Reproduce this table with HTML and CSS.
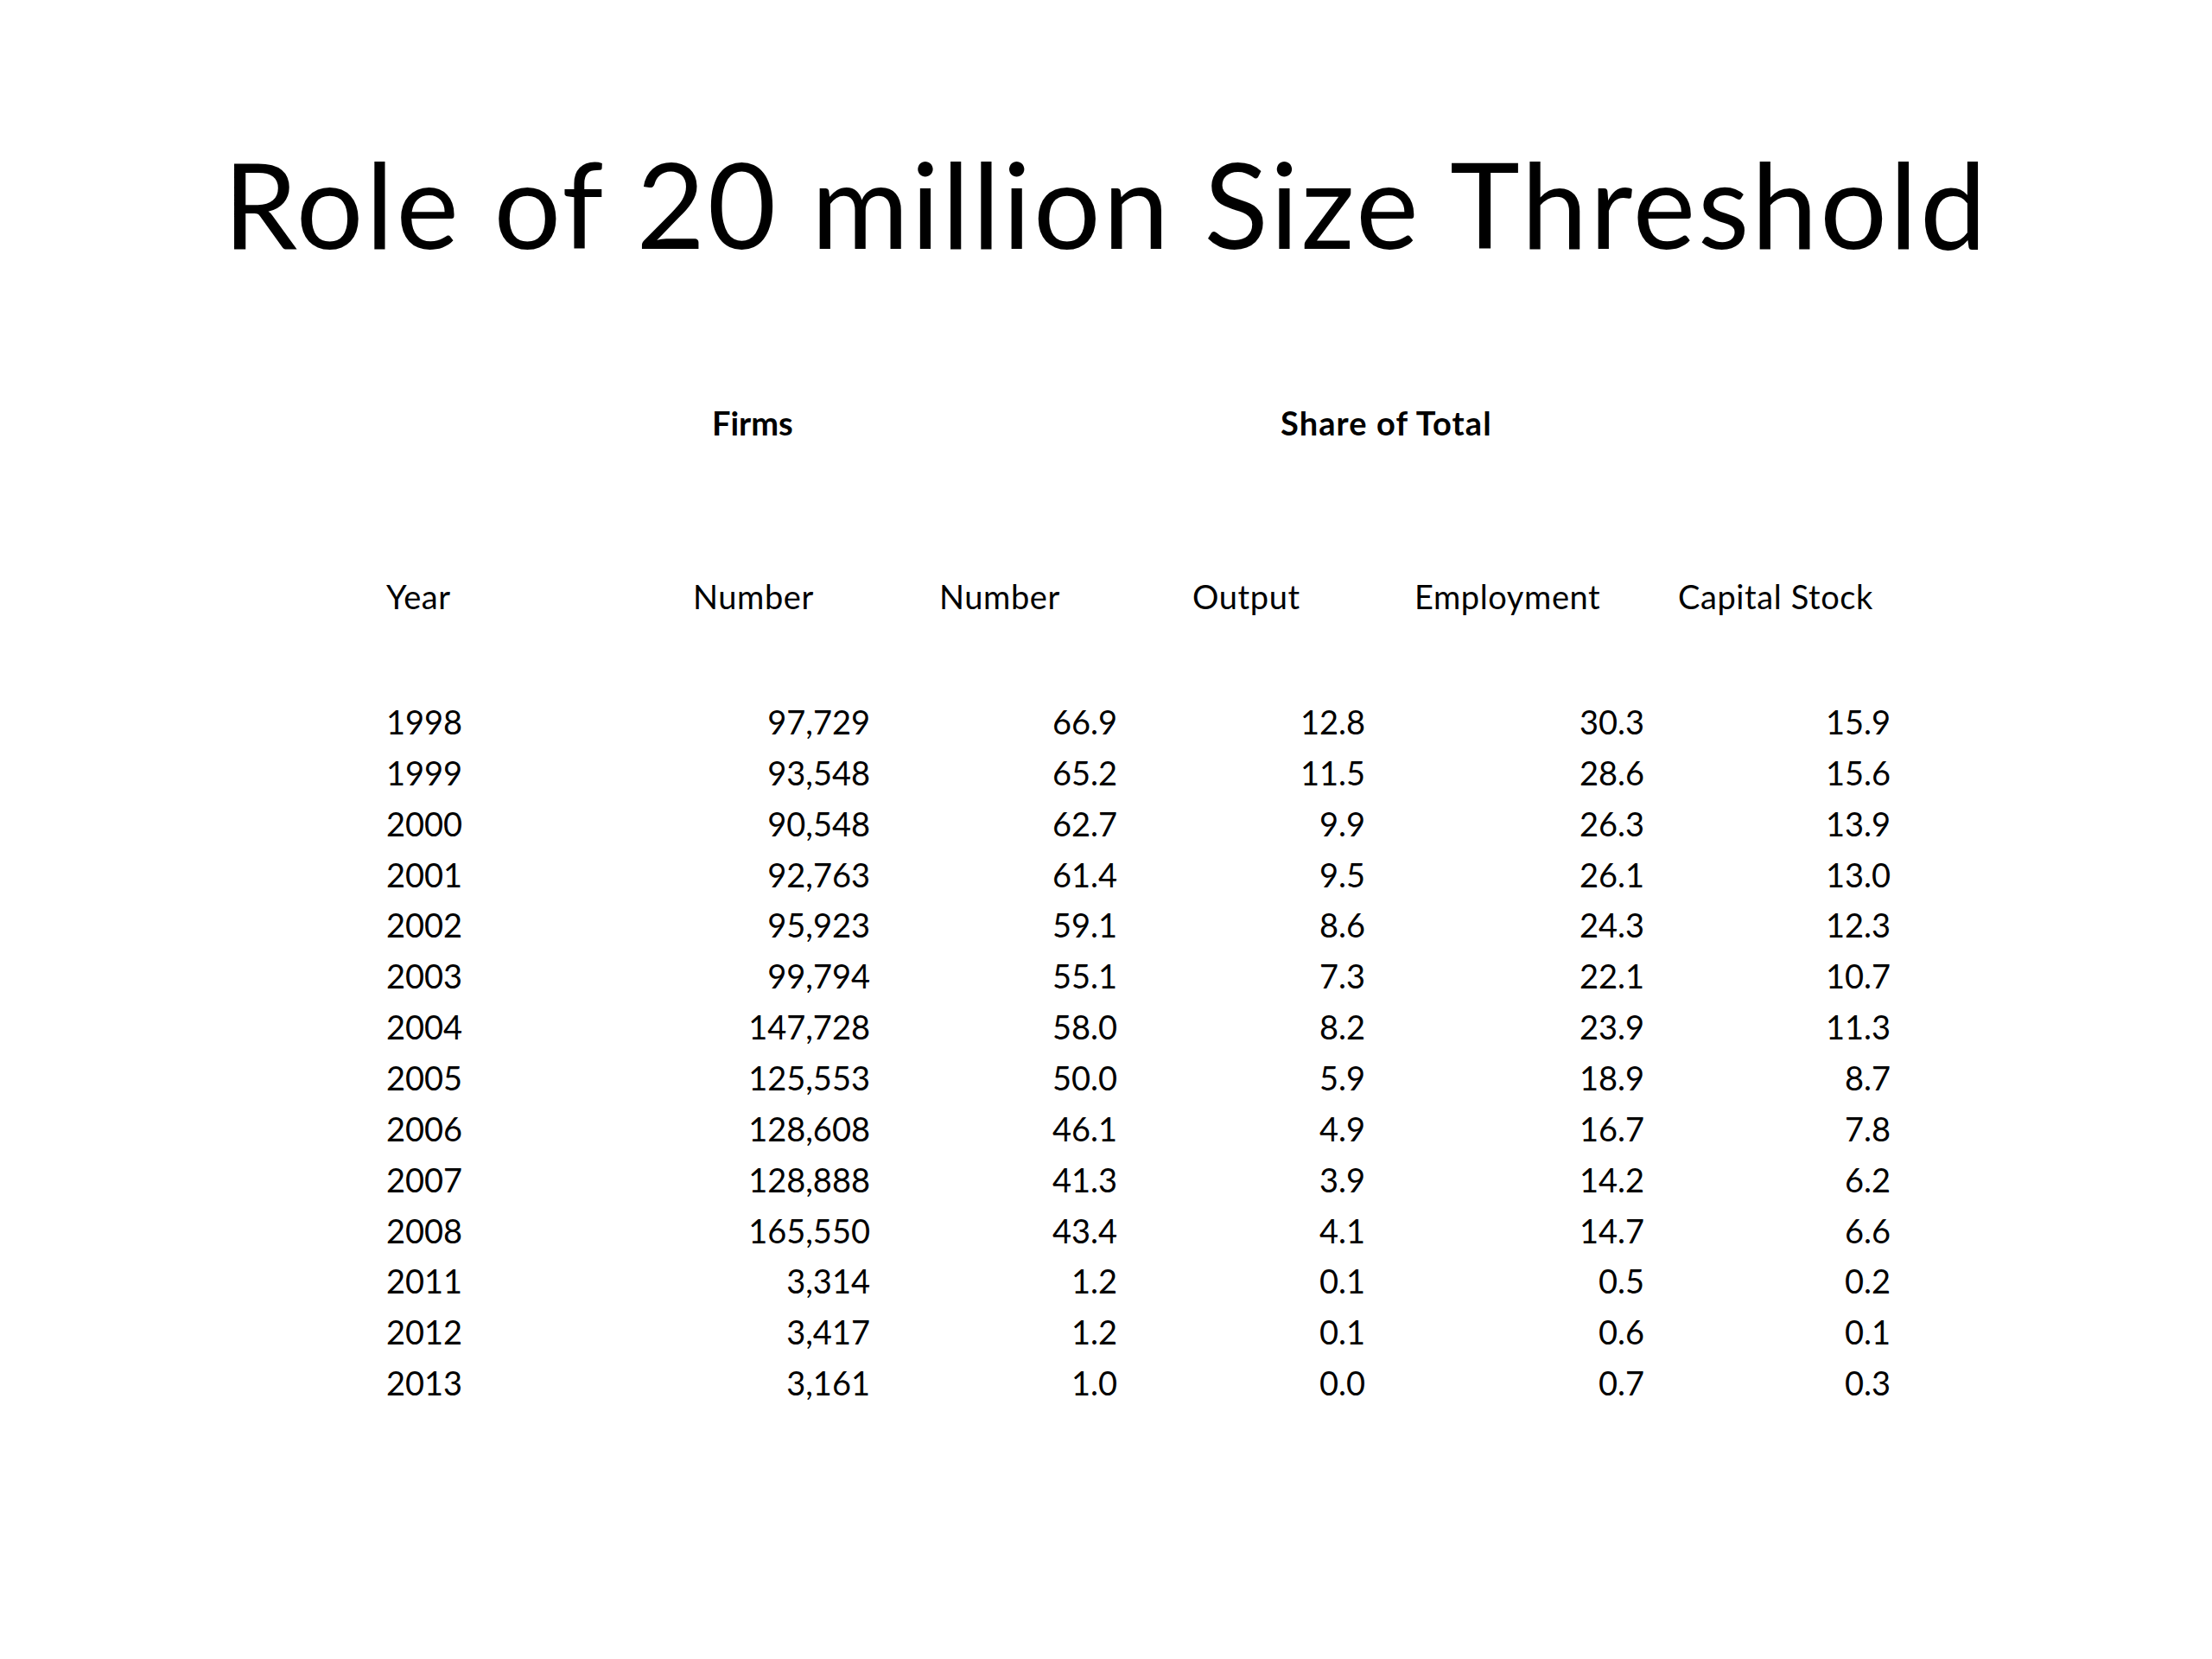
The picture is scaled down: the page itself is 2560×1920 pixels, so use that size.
FILE: index.html
```html
<!DOCTYPE html>
<html lang="en">
<head>
<meta charset="utf-8">
<title>Role of 20 million Size Threshold</title>
<link rel="stylesheet" href="styles.css">
</head>
<body>
<main class="slide">
  <h1 class="title">Role of 20 million Size Threshold</h1>
  <section class="table">
    <div class="row group">
      <div class="cell"></div>
      <div class="cell firms">Firms</div>
      <div class="cell share">Share of Total</div>
    </div>
    <div class="row heads">
      <div class="cell">Year</div>
      <div class="cell">Number</div>
      <div class="cell">Number</div>
      <div class="cell">Output</div>
      <div class="cell">Employment</div>
      <div class="cell">Capital Stock</div>
    </div>
    <div class="data">
      <div class="row"><div class="cell">1998</div><div class="cell n1">97,729</div><div class="cell n2">66.9</div><div class="cell n3">12.8</div><div class="cell n4">30.3</div><div class="cell n5">15.9</div></div>
      <div class="row"><div class="cell">1999</div><div class="cell n1">93,548</div><div class="cell n2">65.2</div><div class="cell n3">11.5</div><div class="cell n4">28.6</div><div class="cell n5">15.6</div></div>
      <div class="row"><div class="cell">2000</div><div class="cell n1">90,548</div><div class="cell n2">62.7</div><div class="cell n3">9.9</div><div class="cell n4">26.3</div><div class="cell n5">13.9</div></div>
      <div class="row"><div class="cell">2001</div><div class="cell n1">92,763</div><div class="cell n2">61.4</div><div class="cell n3">9.5</div><div class="cell n4">26.1</div><div class="cell n5">13.0</div></div>
      <div class="row"><div class="cell">2002</div><div class="cell n1">95,923</div><div class="cell n2">59.1</div><div class="cell n3">8.6</div><div class="cell n4">24.3</div><div class="cell n5">12.3</div></div>
      <div class="row"><div class="cell">2003</div><div class="cell n1">99,794</div><div class="cell n2">55.1</div><div class="cell n3">7.3</div><div class="cell n4">22.1</div><div class="cell n5">10.7</div></div>
      <div class="row"><div class="cell">2004</div><div class="cell n1">147,728</div><div class="cell n2">58.0</div><div class="cell n3">8.2</div><div class="cell n4">23.9</div><div class="cell n5">11.3</div></div>
      <div class="row"><div class="cell">2005</div><div class="cell n1">125,553</div><div class="cell n2">50.0</div><div class="cell n3">5.9</div><div class="cell n4">18.9</div><div class="cell n5">8.7</div></div>
      <div class="row"><div class="cell">2006</div><div class="cell n1">128,608</div><div class="cell n2">46.1</div><div class="cell n3">4.9</div><div class="cell n4">16.7</div><div class="cell n5">7.8</div></div>
      <div class="row"><div class="cell">2007</div><div class="cell n1">128,888</div><div class="cell n2">41.3</div><div class="cell n3">3.9</div><div class="cell n4">14.2</div><div class="cell n5">6.2</div></div>
      <div class="row"><div class="cell">2008</div><div class="cell n1">165,550</div><div class="cell n2">43.4</div><div class="cell n3">4.1</div><div class="cell n4">14.7</div><div class="cell n5">6.6</div></div>
      <div class="row"><div class="cell">2011</div><div class="cell n1">3,314</div><div class="cell n2">1.2</div><div class="cell n3">0.1</div><div class="cell n4">0.5</div><div class="cell n5">0.2</div></div>
      <div class="row"><div class="cell">2012</div><div class="cell n1">3,417</div><div class="cell n2">1.2</div><div class="cell n3">0.1</div><div class="cell n4">0.6</div><div class="cell n5">0.1</div></div>
      <div class="row"><div class="cell">2013</div><div class="cell n1">3,161</div><div class="cell n2">1.0</div><div class="cell n3">0.0</div><div class="cell n4">0.7</div><div class="cell n5">0.3</div></div>
    </div>
  </section>
</main>
</body>
</html>
```

FILE: styles.css
```css
html, body {
  margin: 0;
  padding: 0;
  background: #ffffff;
}

.slide {
  box-sizing: border-box;
  width: 2560px;
  height: 1920px;
  padding-top: 153px;
  overflow: hidden;
  font-family: Lato, "Open Sans", sans-serif;
  color: #000000;
}

.title {
  margin: 0;
  font-size: 137px;
  line-height: 1.2;
  font-weight: 400;
  letter-spacing: 2.8px;
  text-align: center;
}

.table {
  padding-left: 447px;
  font-size: 38px;
  line-height: 58.85px;
}

.row {
  display: grid;
  grid-template-columns: 355px 285px 293px 257px 305px 246px;
  white-space: nowrap;
}

.group {
  margin-top: 143px;
  font-weight: 700;
}

.firms {
  padding-left: 22px;
}

.share {
  grid-column: 3 / 7;
  padding-left: 395px;
  letter-spacing: 1.1px;
}

.heads {
  margin-top: 142px;
  letter-spacing: 0.6px;
}

.data {
  margin-top: 86px;
}

.n1, .n2, .n3, .n4, .n5 {
  text-align: right;
}

.n1 { padding-right: 80px; }
.n2 { padding-right: 87px; }
.n3 { padding-right: 57px; }
.n4 { padding-right: 39px; }
.n5 { padding-right: 0; }
```
